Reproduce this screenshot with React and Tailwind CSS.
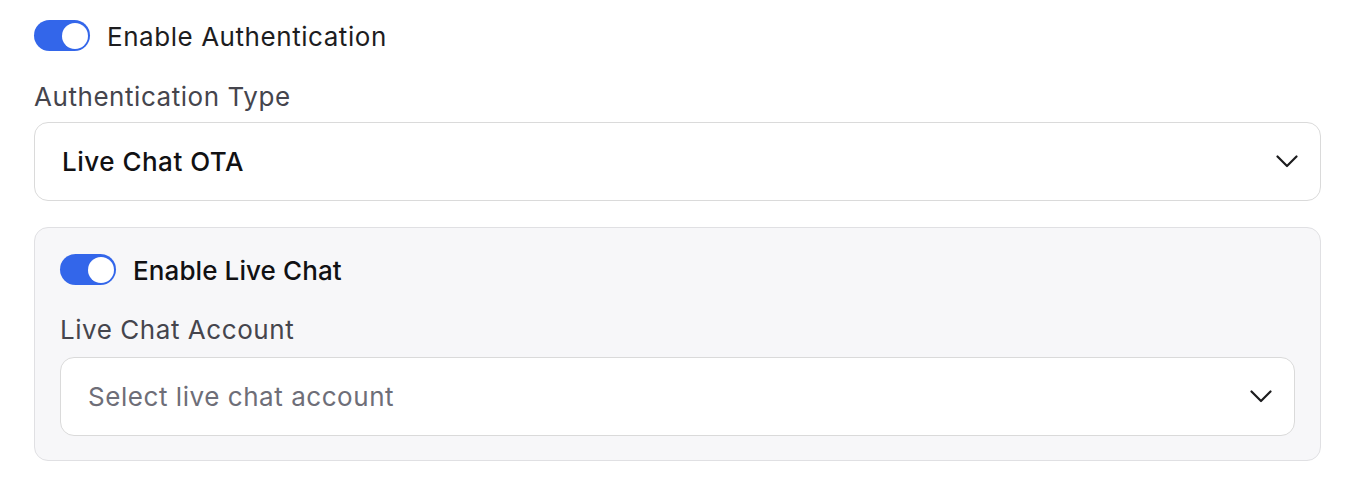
import React, { useState } from 'react';

const Toggle = ({ on, onChange }) => (
    <button
        type="button"
        onClick={() => onChange(!on)}
        className={`relative w-[56px] h-[31px] rounded-full shrink-0 transition-colors ${on ? 'bg-[#3366ea]' : 'bg-[#d4d4d8]'}`}
    >
        <span
            className={`absolute top-[2.5px] w-[26px] h-[26px] rounded-full bg-white transition-all ${on ? 'left-[28px]' : 'left-[2px]'}`}
        ></span>
    </button>
);

const Chevron = () => (
    <svg width="22" height="13" viewBox="0 0 22 13" fill="none" className="shrink-0">
        <path d="M1.5 1.5L11 11L20.5 1.5" stroke="#1c1c1e" strokeWidth="2.2" strokeLinecap="round" strokeLinejoin="round" />
    </svg>
);

const App = () => {
    const [authOn, setAuthOn] = useState(true);
    const [chatOn, setChatOn] = useState(true);

    return (
        <div className="min-h-screen bg-white font-['Inter',sans-serif] tracking-[0.55px] pt-[20px] pl-[34px]">
            <div className="w-[1287px]">
                <div className="flex items-center gap-[17px] h-[31px]">
                    <Toggle on={authOn} onChange={setAuthOn} />
                    <span className="text-[26px] leading-[32px] text-[#1d1d1f] mt-[3px]">Enable Authentication</span>
                </div>

                <div className="mt-[30px] text-[26px] leading-[32px] text-[#45454d]">Authentication Type</div>

                <div className="mt-[9px] h-[79px] rounded-[14px] border border-[#dadada] bg-white flex items-center justify-between pl-[27px] pr-[22px]">
                    <span className="text-[26px] font-medium tracking-[0.5px] text-[#111113]">Live Chat OTA</span>
                    <Chevron />
                </div>

                <div className="mt-[26px] rounded-[14px] border border-[#e0e0e3] bg-[#f7f7f9] pt-[26px] pb-[24px] px-[25px]">
                    <div className="flex items-center gap-[17px] h-[31px]">
                        <Toggle on={chatOn} onChange={setChatOn} />
                        <span className="text-[26px] leading-[32px] font-medium tracking-[0.1px] text-[#111113] mt-[3px]">Enable Live Chat</span>
                    </div>

                    <div className="mt-[29px] text-[26px] leading-[32px] text-[#45454d]">Live Chat Account</div>

                    <div className="mt-[11px] h-[79px] rounded-[14px] border border-[#dadada] bg-white flex items-center justify-between pl-[27px] pr-[22px]">
                        <span className="text-[26px] text-[#6e6e78]">Select live chat account</span>
                        <Chevron />
                    </div>
                </div>
            </div>
        </div>
    );
};

export default App;
